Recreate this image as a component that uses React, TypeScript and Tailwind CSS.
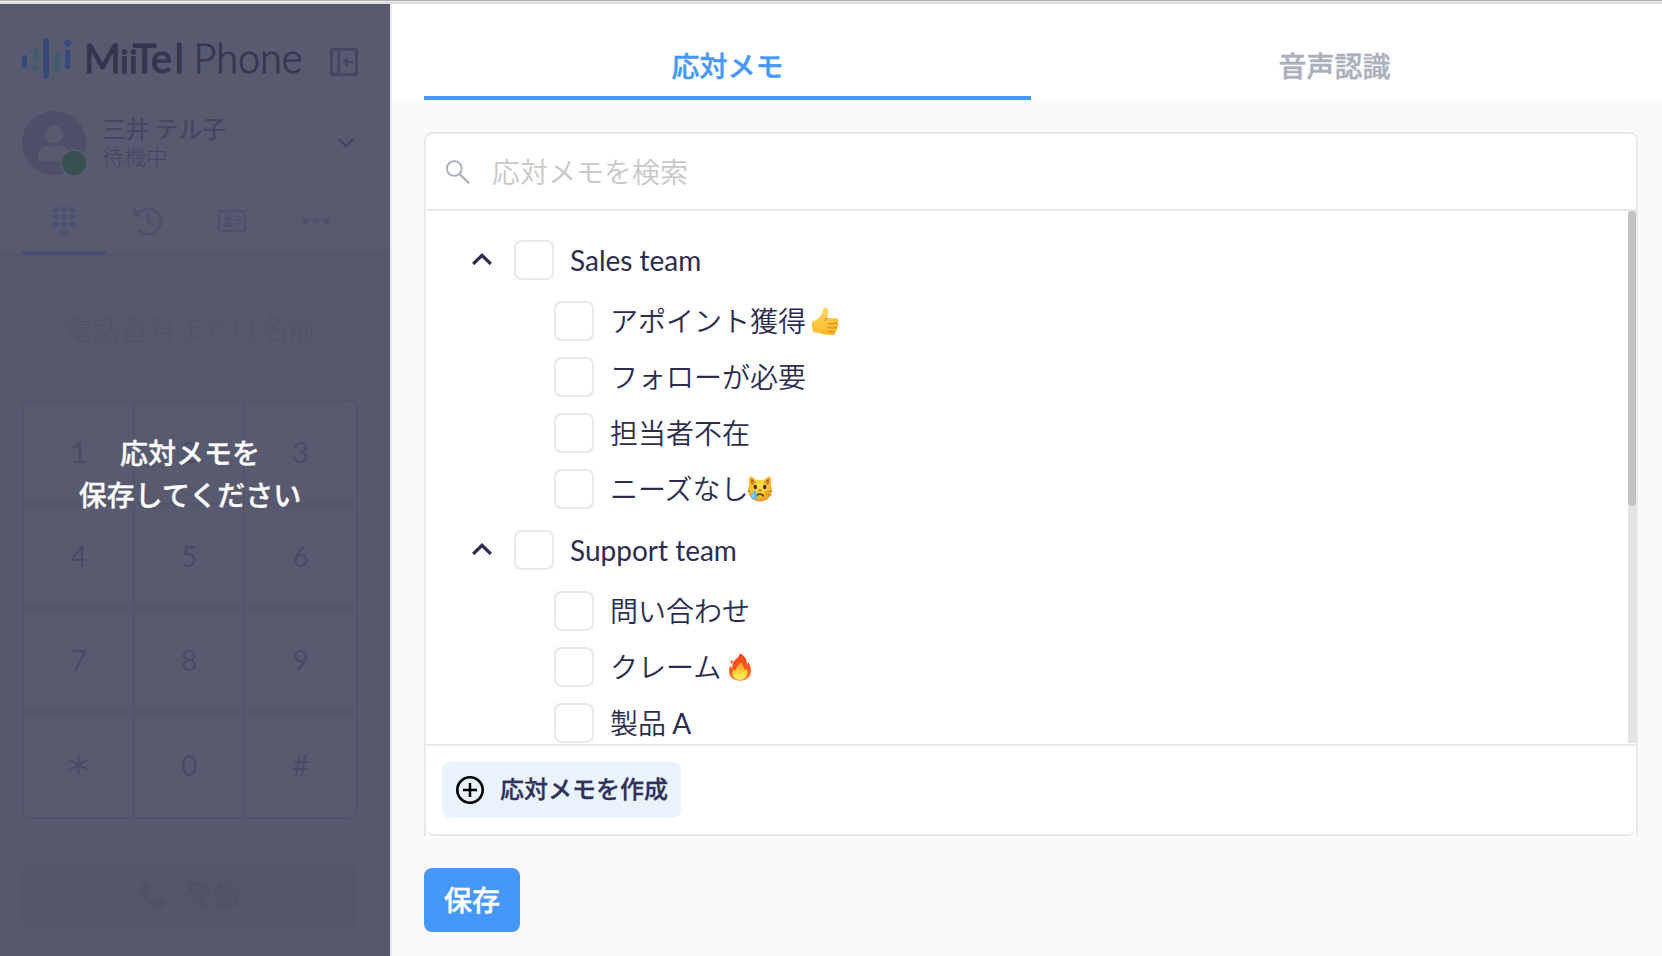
import React from "react";

const FONT = "font-['Lato','Noto_Sans_CJK_JP',sans-serif]";

function Logo() {
  return (
    <svg width="290" height="60" viewBox="20 26 290 60" className="block">
      <g fill="#35497a">
        <rect x="22" y="55" width="5.2" height="13" rx="2.6" />
        <rect x="43.3" y="38" width="5.6" height="41" rx="2.8" />
        <rect x="65" y="49.5" width="5.2" height="19.5" rx="2.6" />
        <circle cx="67.6" cy="43.3" r="3.5" />
      </g>
      <g fill="#3f5c70">
        <rect x="33" y="48" width="5.2" height="14" rx="2.6" />
        <circle cx="35.4" cy="68" r="3.5" />
        <rect x="54.2" y="53" width="5.6" height="19.5" rx="2.8" />
      </g>
      <g fill="#36354f" stroke="#36354f" strokeLinejoin="round" className="font-['Lato','Open_Sans',sans-serif]">
        <text y="73.200" fontSize="40" fontWeight="400" strokeWidth="1.100">
          <tspan x="83.800">M</tspan>
          <tspan x="120.800 129.800" fontSize="30" strokeWidth="1.800">ii</tspan>
          <tspan x="132.700 150.800 174.500">Tel</tspan>
        </text>
        <text x="193.500" y="73.300" fontSize="40.500" fontWeight="300" textLength="109" lengthAdjust="spacingAndGlyphs" strokeWidth="0.800">Phone</text>
      </g>
    </svg>
  );
}

function CollapseIcon() {
  return (
    <svg width="28" height="28" viewBox="0 0 28 28" fill="none" stroke="#46475f" strokeWidth="2.8">
      <rect x="1.4" y="1.4" width="25.2" height="25.2" rx="1.6" />
      <path d="M8.7 1.5v25" />
      <path d="M17 14h6.5" strokeWidth="2.4" />
      <path d="M12.4 14L18 9v10z" fill="#46475f" stroke="none" />
    </svg>
  );
}

function Avatar() {
  return (
    <svg width="66" height="66" viewBox="0 0 66 66">
      <circle cx="32" cy="32" r="32" fill="#4e4f67" />
      <circle cx="32" cy="23.3" r="9" fill="#585a70" />
      <path d="M16 50.3v-3.8c0-8 5.5-12 11-12 2 0 3 .8 5 .8s3-.8 5-.8c5.500 0 11 4 11 12v3.800z" fill="#585a70" />
      <circle cx="52" cy="52" r="14" fill="#585a70" />
      <circle cx="52" cy="52" r="12" fill="#375050" />
    </svg>
  );
}

function KeypadIcon() {
  return (
    <svg width="22" height="28" viewBox="0 0 22 28" fill="#485076">
      {[0, 7.7, 15.2].map((y) => [0, 8.5, 17].map((x) => <rect key={`${x}-${y}`} x={x} y={y} width="5" height="5" />))}
      <rect x="8.5" y="23" width="5" height="5" />
    </svg>
  );
}

function HistoryIcon() {
  return (
    <svg width="28" height="28" viewBox="0 0 28 28" fill="none" stroke="#505168" strokeWidth="2.7">
      <path d="M3.600 7.300A12.600 12.600 0 1 1 5 23.400" strokeLinecap="round" />
      <path d="M0.200 1.200L8.800 9.700H1.200Q0 9.700 0 8.500z" fill="#505168" stroke="none" />
      <path d="M14 6.500v8.300l4.300 3.300" strokeLinecap="round" strokeLinejoin="round" />
    </svg>
  );
}

function CardIcon() {
  return (
    <svg width="28" height="22" viewBox="0 0 28 22" fill="#505168">
      <rect x="1.200" y="1.200" width="25.600" height="19.600" rx="1.400" fill="none" stroke="#505168" strokeWidth="2.200" />
      <circle cx="10.200" cy="8.300" r="3.300" />
      <path d="M5 17v-1.200c0-2 1.600-3.200 3.200-3.200h4c1.600 0 3.200 1.200 3.200 3.200V17z" />
      <path d="M17 7h6.300M17 10.300h6.300M17 13.500h6.300" stroke="#505168" strokeWidth="1.600" />
    </svg>
  );
}

function DotsIcon() {
  return (
    <svg width="28" height="8" viewBox="0 0 28 8" fill="#505168">
      <circle cx="3.200" cy="4" r="3.200" />
      <circle cx="14" cy="4" r="3.200" />
      <circle cx="24.800" cy="4" r="3.200" />
    </svg>
  );
}

function PhoneIcon() {
  return (
    <svg width="26" height="26" viewBox="0 0 512 512" fill="#505268">
      <path d="M164.900 24.600c-7.700-18.600-28-28.500-47.400-23.200l-88 24C12.100 30.200 0 46 0 64c0 247.400 200.600 448 448 448c18 0 33.800-12.100 38.600-29.500l24-88c5.300-19.400-4.600-39.700-23.200-47.400l-96-40c-16.300-6.800-35.200-2.100-46.300 11.600L304.700 368C234.300 334.700 177.300 277.700 144 207.300L193.300 167c13.700-11.200 18.400-30 11.600-46.300l-40-96z" />
    </svg>
  );
}

function SearchIcon() {
  return (
    <svg width="24" height="24" viewBox="0 0 24 24" fill="none" stroke="#a9b1bd" strokeWidth="1.900">
      <circle cx="8.300" cy="8.500" r="7.400" />
      <path d="M13.500 14l9.600 9.400" strokeWidth="2.200" />
    </svg>
  );
}

function ChevronUp() {
  return (
    <svg width="20" height="12" viewBox="0 0 20 12" fill="none" stroke="#2d2c4e" strokeWidth="3.200" className="mb-0.5">
      <path d="M1.200 11L10 2.300l8.800 8.700" />
    </svg>
  );
}

function ThumbsUp() {
  return (
    <svg width="28" height="28" viewBox="0 0 28 28">
      <defs>
        <linearGradient id="thumb" x1="0" y1="0" x2="0.300" y2="1">
          <stop offset="0" stopColor="#ffdc64" />
          <stop offset="1" stopColor="#fcb92b" />
        </linearGradient>
      </defs>
      <path d="M1 14.500c2-.5 4.500-1.800 6.500-3.600 2.500-2.300 4.200-4.500 4.700-8 .3-2 1.500-2.800 2.900-2.400 2.300.7 2.600 3.400 2.100 5.700-.4 2-1.200 3.600-1.600 4.900h8.200c2.800 0 3.800 1.300 3.600 2.700-.1 1-.6 1.600-1.200 2 .9.600 1.300 1.500 1.100 2.600-.2 1-.8 1.700-1.600 2 .6.700.8 1.500.5 2.400-.4 1-1.100 1.500-2 1.700.4.700.4 1.300.1 2-.5 1.100-1.700 1.400-3.100 1.400-5.500 0-9.300-.4-12.700-1.600-2.300-.8-4.300-1.100-6.200-1-1.300-2.500-1.900-7-1.300-10.800z" fill="url(#thumb)" />
      <path d="M16.800 16.300c2.600.6 6.400.6 9.300-.2M17.300 20.500c2.500.6 5.600.6 8.100-.1M17.500 24.400c1.900.5 4 .5 5.900.1M16.500 11.200c-1.200.4-2 1.200-2.200 2.400" stroke="#d9861c" strokeWidth="1.100" fill="none" strokeLinecap="round" />
    </svg>
  );
}

function CryingCat() {
  return (
    <svg width="26" height="28" viewBox="0 0 26 28">
      <defs>
        <radialGradient id="cat" cx="0.500" cy="0.350" r="0.650">
          <stop offset="0" stopColor="#ffe24d" />
          <stop offset="0.700" stopColor="#f9bd2b" />
          <stop offset="1" stopColor="#e89423" />
        </radialGradient>
      </defs>
      <path d="M2.600 1.200C5 1.400 7.600 3 9 4.800h8C18.400 3 21 1.400 23.400 1.200c.9 3 .9 6.300.5 9 1 2 1.400 4.300.8 7-1.100 5.500-6 9.300-11.700 9.300S2.400 22.700 1.300 17.200c-.6-2.700-.2-5 .8-7-.4-2.700-.4-6 .5-9z" fill="url(#cat)" />
      <path d="M4 3.600c1.500.6 2.600 1.500 3.400 2.600L4.300 8.700zM22 3.600c-1.500.6-2.600 1.500-3.400 2.600l3.100 2.500z" fill="#b8621b" />
      <path d="M5 9.200c1-.2 2.300-.8 3-1.700M21 9.200c-1-.2-2.300-.8-3-1.700" stroke="#8a4b12" strokeWidth="1" fill="none" strokeLinecap="round" />
      <ellipse cx="8.300" cy="12" rx="1.700" ry="2.300" fill="#4a2a16" />
      <ellipse cx="17.700" cy="12" rx="1.700" ry="2.300" fill="#4a2a16" />
      <path d="M11.400 14.700h3.200L13 16.500z" fill="#7a3d1c" />
      <path d="M9.500 21c1.600-2.600 5.400-2.600 7 0" stroke="#5b3214" strokeWidth="1.500" fill="none" strokeLinecap="round" />
      <path d="M18.500 17l7-.8M18.500 19l6.300 1.200M0.400 16l3 .4" stroke="#a5671c" strokeWidth="0.700" />
      <path d="M7.400 15c1.600 2.500 2.900 4.400 2.900 6.200a3.100 3.100 0 0 1-6.200 0c0-1.800 1.700-3.700 3.300-6.200z" fill="#58b8f5" />
      <path d="M6.700 18.500c-.9 1.500-1.200 2.600-.4 3.600" stroke="#c6ecff" strokeWidth="1" fill="none" strokeLinecap="round" />
    </svg>
  );
}

function Fire() {
  return (
    <svg width="22" height="28" viewBox="0 0 22 28">
      <defs>
        <linearGradient id="flame" x1="0" y1="0" x2="0" y2="1">
          <stop offset="0" stopColor="#f8431d" />
          <stop offset="0.600" stopColor="#fb5a22" />
          <stop offset="1" stopColor="#fe8a1e" />
        </linearGradient>
        <linearGradient id="core" x1="0" y1="0" x2="0" y2="1">
          <stop offset="0" stopColor="#fe8f24" />
          <stop offset="0.600" stopColor="#ffd93b" />
          <stop offset="1" stopColor="#fff36b" />
        </linearGradient>
      </defs>
      <path d="M10.800.2c5.200 2.600 7.400 6.400 7.100 11.300.7-.7 1.100-1.500 1.200-2.500 2.100 3 3.200 6.400 2.800 10-.5 5-4.800 8.700-10.700 8.700C4.700 27.700.3 24.200 0 19c-.2-2.500.4-4.600 1.500-6.500.4 1.300 1 2.200 1.900 2.800-.6-4.400.8-7 3.600-9.300C9.300 4.300 10.600 2.500 10.800.2z" fill="url(#flame)" />
      <path d="M2.300 7.500c1-.3 1.700.3 1.600 1.300-.1 1-.9 1.800-1.900 2-.6-1.200-.5-2.700.3-3.300z" fill="#fb5a22" />
      <path d="M12.300 9c.4 3 3.300 4.800 3.200 8.200.8-.2 1.500-.9 1.800-1.700 1.200 2 1.500 4.300.7 6.500-1 3-3.700 4.800-7 4.800-3.700 0-6.700-2-7.400-5.300-.4-2 .1-3.800 1-5.300.5.900 1.100 1.500 2 1.700.1-4.200 3.500-5.300 5.700-8.900z" fill="url(#core)" />
    </svg>
  );
}

function Checkbox() {
  return (
    <span className="block size-10 shrink-0 bg-[#f9fafc]">
      <span className="block size-10 rounded-lg border-2 border-[#e8e8ed] bg-white" />
    </span>
  );
}

type Item = { label: string; latin?: string; emoji?: React.ReactNode; gap?: string };

function Group({ title, items }: { title: string; items: Item[] }) {
  return (
    <section className="pb-[21px]">
      <div className="flex h-10 items-center pl-[46px]">
        <ChevronUp />
        <span className="ml-[22px]"><Checkbox /></span>
        <span className="ml-4 text-[28px] leading-10">{title}</span>
      </div>
      <div className="mt-[21px] flex flex-col gap-4 pl-32">
        {items.map((it) => (
          <div key={it.label} className="flex h-10 items-center">
            <Checkbox />
            <span className="ml-4 flex items-center whitespace-pre text-[28px] font-[350] leading-10">
              {it.label}
              {it.latin && <span className="font-normal">{it.latin}</span>}
              {it.emoji && <span className={it.gap}>{it.emoji}</span>}
            </span>
          </div>
        ))}
      </div>
    </section>
  );
}

function Sidebar() {
  const keys = ["1", "2", "3", "4", "5", "6", "7", "8", "9", "＊", "0", "#"];
  return (
    <aside className="relative flex h-[952px] w-[390px] shrink-0 flex-col overflow-hidden bg-[#57596e]">
      <div className="bg-[#585a70]">
        <div className="flex h-[107px] pl-5 pt-[22px]">
          <Logo />
          <div className="ml-5 mt-[22px]"><CollapseIcon /></div>
        </div>
        <div className="flex h-[66px] pl-[22px] text-[#46475f]">
          <Avatar />
          <div className="ml-[14px] w-[236px]">
            <div className="h-[31px] text-[24px] font-medium leading-[35px] tracking-[-0.4px]">三井 テル子</div>
            <div className="text-[22px] font-light leading-[29px]">待機中</div>
          </div>
          <svg width="16" height="10" viewBox="0 0 16 10" fill="none" stroke="#46475f" strokeWidth="2.500" className="mt-[27px]">
            <path d="M0.800 0.900L8 8.300l7.200-7.400" />
          </svg>
        </div>
        <nav className="mt-3 flex h-[68px] border-b-2 border-[#52546a] px-[22px]">
          <div className="flex w-[84px] justify-center border-b-4 border-[#485076] pt-[18px]"><KeypadIcon /></div>
          <div className="flex w-[84px] justify-center pt-[18px]"><HistoryIcon /></div>
          <div className="flex w-[84px] justify-center pt-[21px]"><CardIcon /></div>
          <div className="flex w-[84px] justify-center pt-7"><DotsIcon /></div>
        </nav>
      </div>
      <div className="mx-[22px] mt-[37px] flex h-[72px] w-[336px] items-center justify-center rounded-lg border border-[#55576d] bg-[#56586d] pb-[3px] text-[28px] font-light text-[#515369]">
        電話番号または名前
      </div>
      <div className="mx-[22px] mt-[33px] grid h-[420px] w-[336px] grid-cols-[111px_110px_111px] grid-rows-[104px_104px_104px_104px] overflow-hidden rounded-lg border-2 border-[#53546b] bg-[#53546b]">
        {keys.map((k, i) => (
          <div
            key={k}
            className={
              "flex items-center justify-center bg-[#585a70] text-[28px] text-[#4a4b63] " +
              (i % 3 < 2 ? "border-r-2 border-[#53546b] " : "") +
              (i < 9 ? "border-b-2 border-[#53546b]" : "")
            }
          >
            {k}
          </div>
        ))}
      </div>
      <div className="mx-[22px] mt-11 flex h-16 w-[336px] items-center justify-center gap-[18px] rounded-lg bg-[#54566b] text-[28px] font-medium text-[#505268] [-webkit-text-stroke:0.4px]">
        <PhoneIcon />
        <span>発信</span>
      </div>
      <div className="absolute left-0 top-[428px] w-[380px] text-center text-[28px] font-medium leading-[42px] text-white [-webkit-text-stroke:0.3px]">
        応対メモを
        <br />
        保存してください
      </div>
    </aside>
  );
}

export default function App() {
  return (
    <div className={`flex h-[956px] w-[1662px] flex-col overflow-hidden bg-[#f9fafc] text-[#2d2c4e] ${FONT}`} lang="ja">
      <div className="h-1 shrink-0 border-t border-[#b0afb2] bg-[#dddcdf]">
        <div className="h-px bg-[#f0eff1]" />
      </div>
      <div className="flex">
        <Sidebar />
        <main className="flex h-[952px] flex-1 flex-col border-l-2 border-[#e8e8ed]">
          <div className="flex h-24 shrink-0 bg-white px-8 pr-6 text-[28px] font-medium [-webkit-text-stroke:0.4px]">
            <div className="flex w-[607px] items-center justify-center border-b-4 border-[#4698f8] pt-8 text-[#4698f8]">応対メモ</div>
            <div className="flex w-[607px] items-center justify-center pt-7 text-[#aab1bd]">音声認識</div>
          </div>
          <div className="ml-8 mt-8 w-[1214px] rounded-t-lg border-x-2 border-t-2 border-[#e8e8ed] bg-white">
            <div className="flex h-[77px] items-center border-b-2 border-[#e8e8ed] pl-5">
              <SearchIcon />
              <span className="ml-[22px] text-[28px] font-[350] text-[#c8c8c8]">応対メモを検索</span>
            </div>
            <div className="flex h-[533px] justify-between overflow-hidden">
              <div className="pt-[29px]">
                <Group
                  title="Sales team"
                  items={[
                    { label: "アポイント獲得", emoji: <ThumbsUp />, gap: "ml-[5px]" },
                    { label: "フォローが必要" },
                    { label: "担当者不在" },
                    { label: "ニーズなし", emoji: <CryingCat />, gap: "-ml-[2px]" },
                  ]}
                />
                <Group
                  title="Support team"
                  items={[
                    { label: "問い合わせ" },
                    { label: "クレーム", emoji: <Fire />, gap: "ml-2" },
                    { label: "製品", latin: " A" },
                  ]}
                />
              </div>
              <div className="h-[532px] w-2 bg-[#e4e4e4]">
                <div className="h-[295px] rounded-full bg-[#c2c2c2]" />
              </div>
            </div>
            <div className="flex h-[92px] items-center rounded-b-lg border-b-2 border-t-2 border-[#e8e8ed] pl-4">
              <button className="flex h-14 w-[239px] items-center rounded-lg bg-[#e9f4ff] pl-[14px] text-[24px] font-medium text-[#30305a]">
                <svg width="28" height="28" viewBox="0 0 28 28" fill="none" stroke="#000" strokeWidth="2.600">
                  <circle cx="14" cy="14" r="12.700" />
                  <path d="M14 7v14M7 14h14" strokeWidth="2.500" />
                </svg>
                <span className="ml-4 pb-0.5 [-webkit-text-stroke:0.3px]">応対メモを作成</span>
              </button>
            </div>
          </div>
          <button className="ml-8 mt-8 h-16 w-24 rounded-lg bg-[#4698f8] text-[28px] font-medium text-white [-webkit-text-stroke:0.4px]">保存</button>
        </main>
      </div>
    </div>
  );
}
